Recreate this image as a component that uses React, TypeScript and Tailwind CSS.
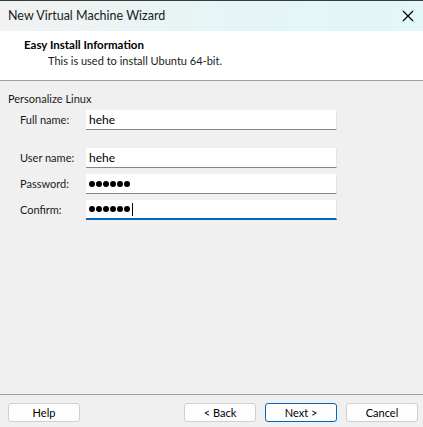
import React from 'react';

const font = { fontFamily: 'Lato, "Noto Sans", sans-serif' };

function Field({ label, value, mask, focused }: { label: string; value: string; mask?: boolean; focused?: boolean }) {
  return (
    <div className="flex items-center h-[20px]">
      <span className="w-[78px] shrink-0 whitespace-nowrap pl-[12px] text-[11px] text-[#1a1a1a]">{label}</span>
      <div
        className={
          'w-[251px] h-[20px] bg-white flex items-center pl-[3px] border-r border-r-[#e5e5e5] ' +
          (focused ? 'border-b-2 border-b-[#0067c0]' : 'border-b border-b-[#868686]')
        }
      >
        {mask ? (
          <span className="flex items-center gap-[1px]">
            {Array.from({ length: 6 }).map((_, i) => (
              <span key={i} className="w-[6px] h-[6px] rounded-full bg-black" />
            ))}
            {focused && <span className="ml-[1px] w-[1px] h-[13px] bg-black" />}
          </span>
        ) : (
          <span className="text-[12px] text-black">{value}</span>
        )}
      </div>
    </div>
  );
}

function Btn({ children, primary }: { children: React.ReactNode; primary?: boolean }) {
  return (
    <button
      className={
        'w-[72px] h-[19px] rounded-[3px] bg-[#fdfdfd] text-[11px] text-black leading-none flex items-center justify-center ' +
        (primary ? 'border border-[#0067c0]' : 'border border-[#d0d0d0]')
      }
    >
      {children}
    </button>
  );
}

export default function App() {
  return (
    <div className="w-[423px] h-[427px] flex flex-col bg-[#f0f0f0] overflow-hidden" style={font}>
      <div className="h-[31px] shrink-0 flex items-center justify-between pl-[8px] pr-[9px] bg-gradient-to-r from-[#f2f2f2] via-[#e6f5f5] to-[#e2f7f7] border-t border-t-[#3a3a3a]">
        <span className="text-[12.5px] text-[#1a1a1a]">New Virtual Machine Wizard</span>
        <svg width="12" height="12" viewBox="0 0 12 12" className="text-black">
          <path d="M1 1 L11 11 M11 1 L1 11" stroke="currentColor" strokeWidth="1.2" />
        </svg>
      </div>
      <div className="h-[50px] shrink-0 bg-white border-b border-b-[#a0a0a0] pl-[24px] pt-[6px]">
        <div className="text-[11.5px] font-bold text-black leading-[16px]">Easy Install Information</div>
        <div className="pl-[24px] text-[11px] text-[#1a1a1a] leading-[16px]">This is used to install Ubuntu 64-bit.</div>
      </div>
      <div className="flex-1 flex flex-col pl-[8px]">
        <div className="pt-[10px] text-[11px] text-[#1a1a1a] leading-[16px]">Personalize Linux</div>
        <div className="mt-[3px] flex flex-col">
          <Field label="Full name:" value="hehe" />
          <div className="h-[18px]" />
          <Field label="User name:" value="hehe" />
          <div className="h-[6px]" />
          <Field label="Password:" value="" mask />
          <div className="h-[6px]" />
          <Field label="Confirm:" value="" mask focused />
        </div>
      </div>
      <div className="h-[33px] shrink-0 border-t border-t-[#a0a0a0] flex items-center pl-[8px] pr-[5px] pt-[2px]">
        <Btn>Help</Btn>
        <div className="flex-1" />
        <div className="flex gap-[9px]">
          <Btn>&lt; Back</Btn>
          <Btn primary>Next &gt;</Btn>
          <Btn>Cancel</Btn>
        </div>
      </div>
    </div>
  );
}
